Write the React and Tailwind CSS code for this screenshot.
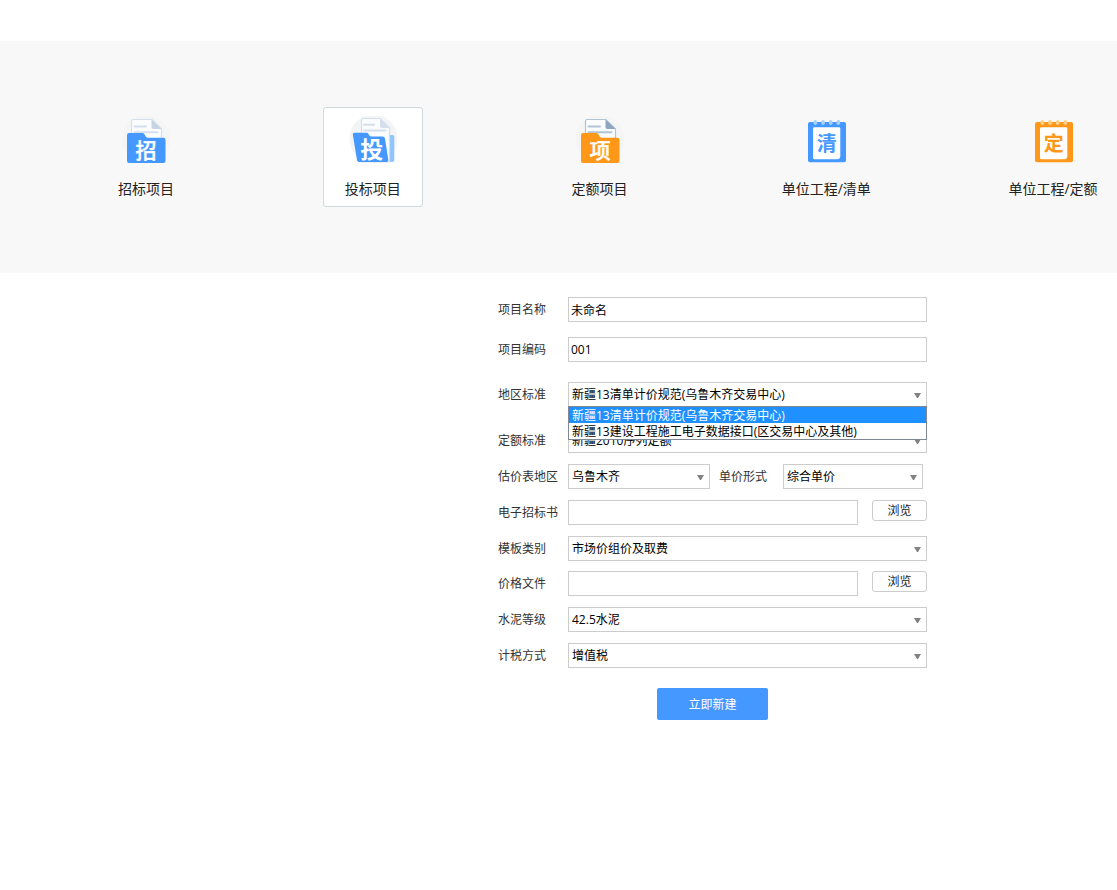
import React, { useState } from 'react';
import clsx from 'clsx';

const FolderIcon = ({ char, color, line, fold }) => (
    <svg className="h-12 w-12" viewBox="0 0 48 48" aria-hidden="true">
        <circle cx="24" cy="23" r="24" fill="#f5f5f5" />
        <path d="M11 3.5H30L39.5 13V24H9.5V5Q9.5 3.5 11 3.5Z" fill="#fbfcfe" stroke={line} strokeWidth="1.2" />
        <path d="M29.5 3.5L39.5 13H31.5Q29.5 13 29.5 11Z" fill={fold} />
        <path d="M12.5 10.5H24M12.5 16.3H35.5" stroke={line} strokeWidth="2" strokeLinecap="round" />
        <path d="M5 19Q5 17 7 17H20.5Q22 17 22.7 18.5L23.6 20.3Q24.2 21.7 25.8 21.7H41.5Q43.5 21.7 43.5 23.7V45Q43.5 47 41.5 47H7Q5 47 5 45Z" fill={color} />
        <text x="24" y="41.5" textAnchor="middle" fontSize="21" fontWeight="500" fill="#fff" stroke="#fff" strokeWidth="0.4">{char}</text>
    </svg>
);

const OpenFolderIcon = ({ char }) => (
    <svg className="h-12 w-12" viewBox="0 0 48 48" aria-hidden="true">
        <circle cx="24.5" cy="22.5" r="24" fill="#f3f4f5" />
        <path d="M36 19H43.5Q45.3 19 45.3 21V44Q45.3 46 43.3 46H36Z" fill="#90c4ff" />
        <path d="M13.5 2.5H31L40.5 12V46H12.5V4Q12.5 2.5 13.5 2.5Z" fill="#fbfcfe" stroke="#d5dfeb" strokeWidth="1.2" />
        <path d="M31 2.5L40.5 12H33Q31 12 31 10Z" fill="#d5dfeb" />
        <path d="M15 8.8H25M15 14.4H36.5" stroke="#d5dfeb" strokeWidth="2" strokeLinecap="round" />
        <path d="M3.8 18.4Q3.6 16.7 5.3 16.7H17.5Q18.8 16.7 19.5 18L20.2 19.2Q21 20.6 22.5 20.6H33.5Q35.6 20.6 36 22.6L39.3 44Q39.6 46 37.6 46H10.2Q8.3 46 8 44.3Z" fill="#4598ff" />
        <text x="22.8" y="42" textAnchor="middle" fontSize="23" fontWeight="700" fill="#fff">{char}</text>
    </svg>
);

const NotebookIcon = ({ char, color, ring }) => (
    <svg className="h-12 w-12" viewBox="0 0 48 48" aria-hidden="true">
        <rect x="6" y="6" width="38" height="40.3" rx="2" fill={color} />
        <path d="M12.5 11.3H37Q38.3 11.3 38.3 12.6V40Q38.3 43.3 35 43.3H12.5Q11 43.3 11 42V12.6Q11 11.3 12.5 11.3Z" fill="#fff" />
        {[13.3, 21, 28.7, 36.3].map(x => (
            <rect key={x} x={x - 1.8} y="4" width="3.6" height="5" rx="1.8" fill={ring} />
        ))}
        <text x="24.7" y="34.5" textAnchor="middle" fontSize="20" fontWeight="700" fill={color}>{char}</text>
    </svg>
);

const projectTypes = [
    { id: 'tender', label: '招标项目', icon: <FolderIcon char="招" color="#4598ff" line="#d5dfeb" fold="#c5d3e3" /> },
    { id: 'bid', label: '投标项目', icon: <OpenFolderIcon char="投" /> },
    { id: 'quota', label: '定额项目', icon: <FolderIcon char="项" color="#ff9718" line="#b3c3d6" fold="#8ea6c0" /> },
    { id: 'unit-list', label: '单位工程/清单', icon: <NotebookIcon char="清" color="#4598ff" ring="#a5d0ff" /> },
    { id: 'unit-quota', label: '单位工程/定额', icon: <NotebookIcon char="定" color="#ff9718" ring="#ffd08c" /> },
];

const regionOptions = [
    '新疆13清单计价规范(乌鲁木齐交易中心)',
    '新疆13建设工程施工电子数据接口(区交易中心及其他)',
];

const Row = ({ id, label, children }) => (
    <div className="flex items-start">
        <label htmlFor={id} className="w-[70px] shrink-0 leading-[25px] text-[#333]">{label}</label>
        {children}
    </div>
);

const TextInput = ({ id, defaultValue }) => (
    <input id={id} type="text" defaultValue={defaultValue} className="h-[25px] min-w-0 flex-1 border border-[#ccc] bg-white px-0.5 text-black outline-none" />
);

const Select = ({ id, options, className = 'flex-1', value, onChange }) => (
    <div className={clsx('relative', className)}>
        <select id={id} value={value} onChange={onChange} className="block h-[25px] w-full appearance-none border border-[#ccc] bg-white pr-5 pl-[3px] text-black outline-none">
            {options.map(o => <option key={o}>{o}</option>)}
        </select>
        <svg className="pointer-events-none absolute top-[11px] right-[6px] h-[5px] w-[7px]" viewBox="0 0 7 5" aria-hidden="true">
            <path d="M0 0H7L4 5H3Z" fill="#828282" />
        </svg>
    </div>
);

const BrowseButton = () => (
    <button type="button" className="ml-3.5 h-[21px] w-[55px] rounded-[3px] border border-[#ccc] bg-white leading-[19px] text-[#222]">浏览</button>
);

const App = () => {
    const [active, setActive] = useState('bid');
    const [region, setRegion] = useState(regionOptions[0]);
    const [regionOpen, setRegionOpen] = useState(true);

    const pickRegion = (value) => {
        setRegion(value);
        setRegionOpen(false);
    };

    return (
        <div className="min-h-screen bg-white pt-[41px] font-['Open_Sans','Noto_Sans_CJK_SC',sans-serif] text-xs">
            <nav className="flex justify-between bg-[#f8f8f8] pt-[66px] pr-3.5 pb-[66px] pl-24">
                {projectTypes.map(t => (
                    <button
                        key={t.id}
                        type="button"
                        onClick={() => setActive(t.id)}
                        className={clsx(
                            'flex h-[100px] w-[100px] flex-col items-center rounded-[3px] border pt-2',
                            active === t.id ? 'border-[#d0d9dc] bg-white' : 'border-transparent'
                        )}
                    >
                        {t.icon}
                        <span className="mt-[15px] text-sm leading-5 whitespace-nowrap text-[#222]">{t.label}</span>
                    </button>
                ))}
            </nav>

            <form className="mt-6 mr-[190px] ml-auto w-full max-w-[429px]" onSubmit={(e) => e.preventDefault()}>
                <div className="flex flex-col gap-[15px]">
                    <Row id="name" label="项目名称"><TextInput id="name" defaultValue="未命名" /></Row>
                    <Row id="code" label="项目编码"><TextInput id="code" defaultValue="001" /></Row>
                </div>

                <div className="relative mt-5 mb-[21px]">
                    <Row id="region" label="地区标准">
                        <Select id="region" options={regionOptions} value={region} onChange={(e) => setRegion(e.target.value)} />
                    </Row>
                    {regionOpen && (
                        <ul role="listbox" aria-label="地区标准" className="absolute top-6 right-0 left-[70px] z-10 border border-[#7f8793] bg-white">
                            {regionOptions.map(o => (
                                <li
                                    key={o}
                                    role="option"
                                    aria-selected={o === region}
                                    onClick={() => pickRegion(o)}
                                    className={clsx('h-4 pl-[3px] leading-[18px] whitespace-nowrap', o === region ? 'bg-[#1e90ff] text-white' : 'text-black')}
                                >
                                    {o}
                                </li>
                            ))}
                        </ul>
                    )}
                </div>

                <div className="flex flex-col gap-[11px]">
                    <Row id="quota" label="定额标准"><Select id="quota" options={['新疆2010序列定额']} /></Row>
                    <Row id="area" label="估价表地区">
                        <Select id="area" options={['乌鲁木齐']} className="w-[142px]" />
                        <label htmlFor="price-form" className="ml-[9px] w-16 leading-[25px] text-[#333]">单价形式</label>
                        <Select id="price-form" options={['综合单价']} className="w-[140px]" />
                    </Row>
                    <Row id="tender-file" label="电子招标书"><TextInput id="tender-file" /><BrowseButton /></Row>
                    <Row id="template" label="模板类别"><Select id="template" options={['市场价组价及取费']} /></Row>
                </div>

                <div className="mt-2.5 flex flex-col gap-[11px]">
                    <Row id="price-file" label="价格文件"><TextInput id="price-file" /><BrowseButton /></Row>
                    <Row id="cement" label="水泥等级"><Select id="cement" options={['42.5水泥']} /></Row>
                    <Row id="tax" label="计税方式"><Select id="tax" options={['增值税']} /></Row>
                </div>

                <button type="submit" className="mx-auto mt-5 block h-8 w-[111px] rounded-xs bg-[#4598ff] pt-0.5 text-white">立即新建</button>
            </form>
        </div>
    );
};

export default App;
